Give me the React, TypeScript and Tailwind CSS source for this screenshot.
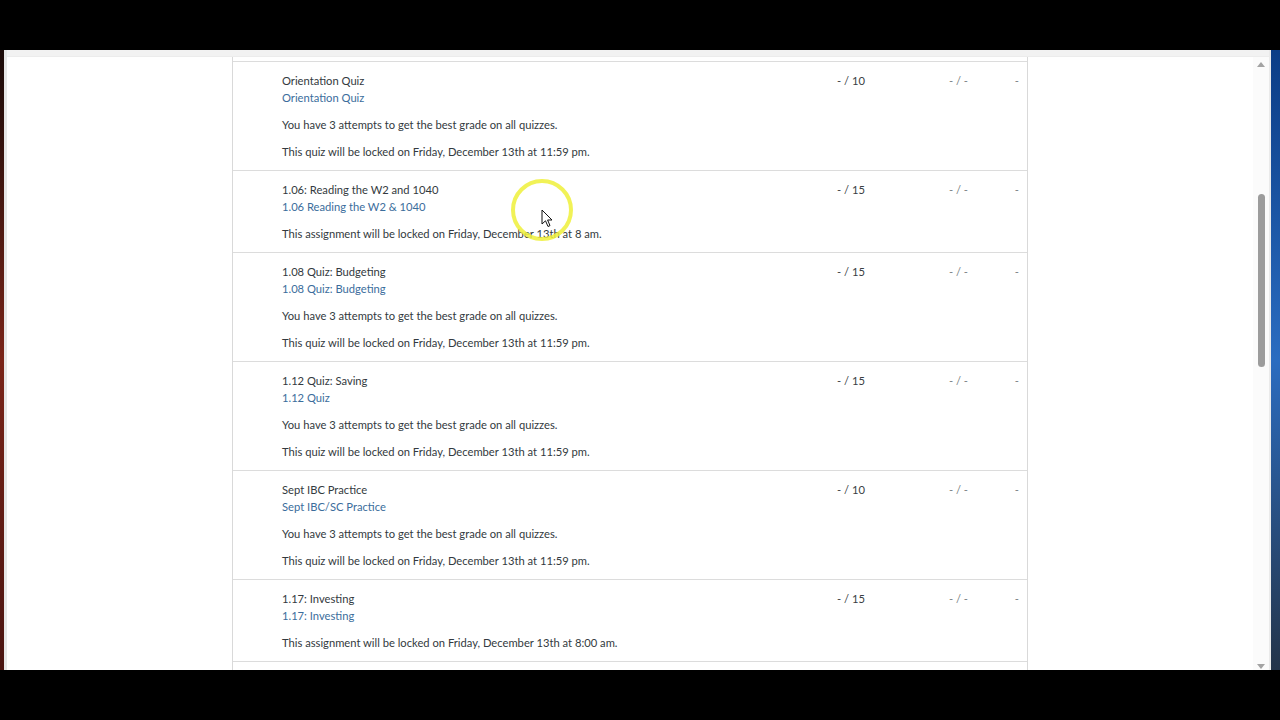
import React from 'react'

type Row = {
    title: string
    link: string
    notes: string[]
    points: string
}

const ATTEMPTS = 'You have 3 attempts to get the best grade on all quizzes.'
const QUIZ_LOCK = 'This quiz will be locked on Friday, December 13th at 11:59 pm.'

const rows: Row[] = [
    { title: 'Orientation Quiz', link: 'Orientation Quiz', notes: [ATTEMPTS, QUIZ_LOCK], points: '- / 10' },
    { title: '1.06: Reading the W2 and 1040', link: '1.06 Reading the W2 & 1040', notes: ['This assignment will be locked on Friday, December 13th at 8 am.'], points: '- / 15' },
    { title: '1.08 Quiz: Budgeting', link: '1.08 Quiz: Budgeting', notes: [ATTEMPTS, QUIZ_LOCK], points: '- / 15' },
    { title: '1.12 Quiz: Saving', link: '1.12 Quiz', notes: [ATTEMPTS, QUIZ_LOCK], points: '- / 15' },
    { title: 'Sept IBC Practice', link: 'Sept IBC/SC Practice', notes: [ATTEMPTS, QUIZ_LOCK], points: '- / 10' },
    { title: '1.17: Investing', link: '1.17: Investing', notes: ['This assignment will be locked on Friday, December 13th at 8:00 am.'], points: '- / 15' },
]

function GradeRow({ row }: { row: Row }) {
    return (
        <div className="flex border-t border-[#dcdcdc] pt-[10px] pb-[10px] pr-[8px] text-[11.2px] leading-[17px]">
            <div className="flex-1 pl-[49px]">
                <div className="text-[#333a40]">{row.title}</div>
                <div className="text-[#3b6d9c]">{row.link}</div>
                {row.notes.map((n, i) => (
                    <div key={i} className="mt-[10px] text-[#333a40]">{n}</div>
                ))}
            </div>
            <div className="w-[100px] text-right text-[#3a3f44]">{row.points}</div>
            <div className="w-[103px] text-right text-[#7a7f84]">- / -</div>
            <div className="w-[51px] text-right text-[#7a7f84]">-</div>
        </div>
    )
}

export default function App() {
    return (
        <div className="w-[1280px] h-[720px] bg-black flex flex-col overflow-hidden" style={{ fontFamily: 'Lato, "Liberation Sans", sans-serif' }}>
            <div className="h-[50px] shrink-0" />
            <div className="h-[620px] flex shrink-0">
                {/* desktop behind the window */}
                <div className="w-[4px] bg-gradient-to-b from-[#1a0a08] via-[#7a2418] to-[#4a1410]" />
                <div className="flex-1 flex flex-col border-l-[3px] border-[#e6e6e6] bg-white">
                    <div className="h-[7px] bg-[#f2f2f2] border-b border-[#ececec]" />
                    <div className="flex-1 flex min-h-0">
                        <div className="flex-1 relative overflow-hidden">
                            <div className="ml-[225px] w-[796px] border-x border-[#d9d9d9] h-full">
                                <div className="h-[4px]" />
                                {rows.map((r, i) => (
                                    <GradeRow key={i} row={r} />
                                ))}
                                <div className="border-t border-[#dcdcdc] h-[20px]" />
                            </div>

                            {/* cursor highlight */}
                            <svg className="absolute left-[498px] top-[116px]" width="74" height="74" viewBox="0 0 74 74">
                                <circle cx="37" cy="37" r="29" fill="none" stroke="#eef03a" strokeOpacity="0.85" strokeWidth="4" />
                            </svg>
                            <svg className="absolute left-[534px] top-[152px]" width="14" height="20" viewBox="0 0 14 20">
                                <path d="M1 1 L1 15 L4.5 11.8 L7 17.5 L9 16.6 L6.6 11 L11 11 Z" fill="#fff" stroke="#111" strokeWidth="1" strokeLinejoin="round" />
                            </svg>
                        </div>
                        {/* scrollbar */}
                        <div className="w-[16px] bg-[#fbfbfb] flex flex-col items-center relative">
                            <div className="mt-[5px] w-0 h-0 border-l-[4px] border-r-[4px] border-b-[5px] border-l-transparent border-r-transparent border-b-[#a3a3a3]" />
                            <div className="mt-[127px] w-[7px] h-[173px] rounded-full bg-[#9c9c9c]" />
                            <div className="mt-auto mb-[1px] w-0 h-0 border-l-[4px] border-r-[4px] border-t-[5px] border-l-transparent border-r-transparent border-t-[#a3a3a3]" />
                        </div>
                    </div>
                </div>
                <div className="w-[2px] bg-[#eaeaea]" />
                <div className="w-[9px] bg-gradient-to-b from-[#0b3d86] via-[#2a6cc0] to-[#23344a]" />
            </div>
            <div className="h-[50px] shrink-0" />
        </div>
    )
}
